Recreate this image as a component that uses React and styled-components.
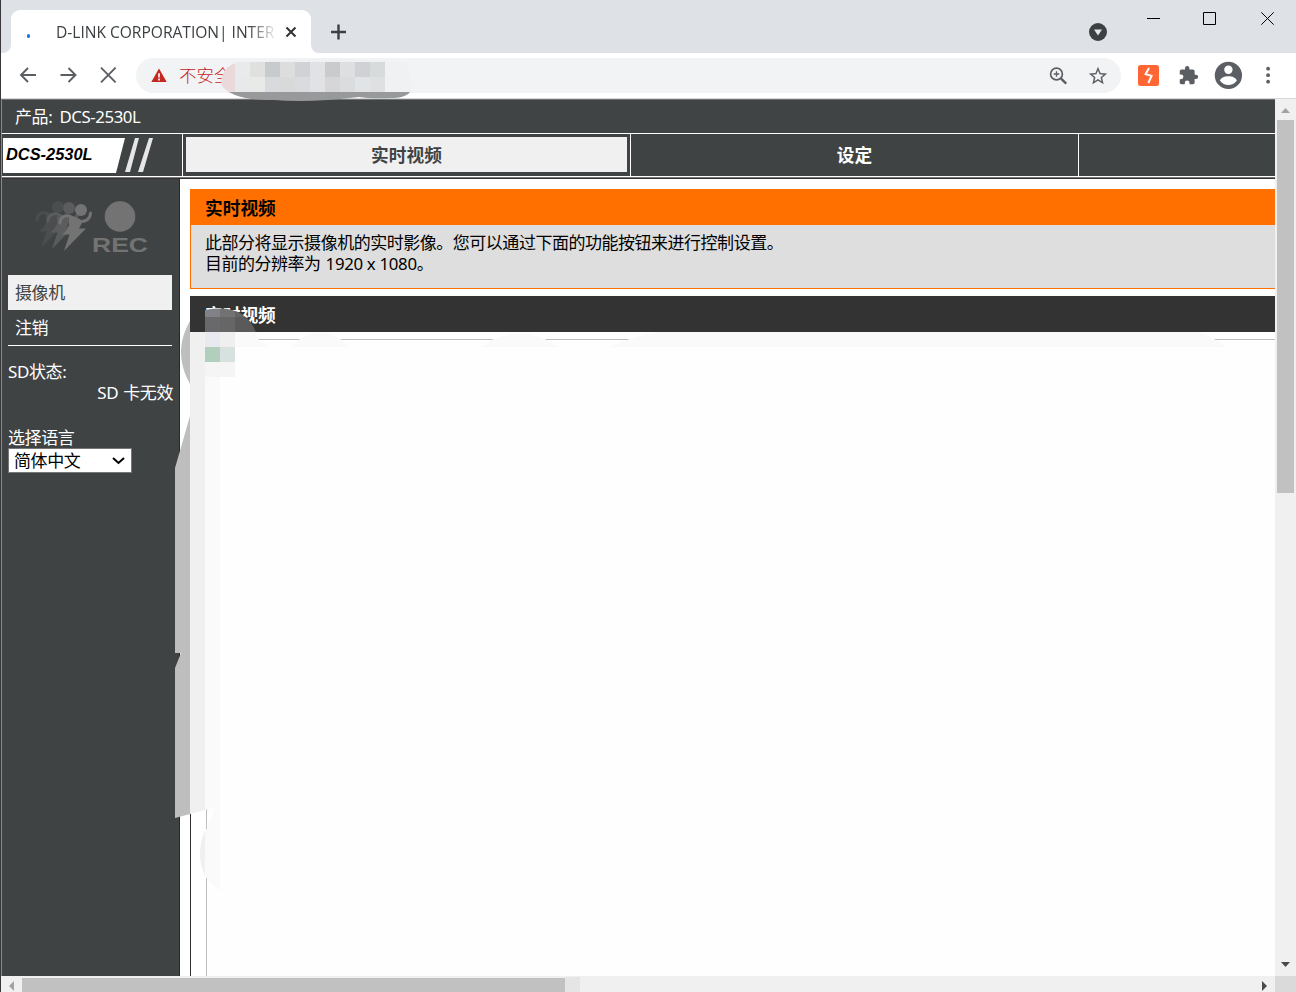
import React from "react";
import styled, { createGlobalStyle } from "styled-components";

const GlobalStyle = createGlobalStyle`
  * { box-sizing: border-box; }
  body { margin: 0; overflow: hidden; background: #fff; }
`;

const cjk = `"Noto Sans", "Noto Sans CJK SC", sans-serif`;

const Window = styled.div`
  position: relative;
  width: 1296px;
  height: 992px;
  display: flex;
  flex-direction: column;
  overflow: hidden;
  border-left: 1px solid #38383a;
  background: #fff;
  font-family: ${cjk};
`;

const TabStrip = styled.header`
  height: 53px;
  flex: none;
  display: flex;
  align-items: flex-end;
  background: #dee1e6;
  padding-left: 2px;
`;

const TabFoot = styled.svg`
  width: 8px;
  height: 8px;
  flex: none;
  display: block;
`;

const BrowserTab = styled.div`
  width: 300px;
  height: 43px;
  flex: none;
  display: flex;
  align-items: center;
  padding: 0 12px 0 16px;
  background: #fff;
  border-radius: 9px 9px 0 0;
`;

const LoadingDot = styled.span`
  width: 3px;
  height: 4px;
  margin-top: 8px;
  border-radius: 2px;
  background: #1a73e8;
`;

const TabTitle = styled.span`
  width: 219px;
  flex: none;
  margin-left: 26px;
  white-space: nowrap;
  font: 15.6px/24px "Open Sans", sans-serif;
  letter-spacing: -0.03px;
  color: #3c4043;
  mask-image: linear-gradient(90deg, #000 192px, transparent 222px);
`;

const TabClose = styled.svg`
  width: 12px;
  height: 12px;
  flex: none;
  margin-left: 10px;
`;

const NewTab = styled.svg`
  width: 16px;
  height: 16px;
  margin: 0 0 13px 12px;
`;

const WindowControls = styled.div`
  margin-left: auto;
  align-self: flex-start;
  display: flex;
  align-items: flex-start;
`;

const Glyph = styled.svg`
  display: block;
  flex: none;
  width: ${(p) => p.$w}px;
  height: ${(p) => p.$h || p.$w}px;
  margin-left: ${(p) => p.$left || 0}px;
  margin-top: ${(p) => p.$top || 0}px;
`;

const Toolbar = styled.div`
  height: 46px;
  flex: none;
  display: flex;
  align-items: center;
  padding: 0 0 1px 16px;
  border-bottom: 1px solid #d4d6d8;
`;

const Omnibox = styled.div`
  width: 985px;
  height: 35px;
  margin-left: 18px;
  display: flex;
  align-items: center;
  padding: 0 11px 0 15px;
  border-radius: 18px;
  background: #f1f3f4;
`;

const Insecure = styled.span`
  width: 54px;
  flex: none;
  white-space: nowrap;
  margin-left: 12px;
  font-size: 17.5px;
  line-height: 26px;
  font-weight: 300;
  color: #c5221f;
`;

const Viewport = styled.div`
  height: 877px;
  flex: none;
  display: flex;
`;

const Page = styled.main`
  width: 1274px;
  flex: none;
  display: flex;
  flex-direction: column;
  border-top: 1px solid #707172;
  border-left: 1px solid #8a8a8b;
`;

const ProductBar = styled.div`
  height: 34px;
  flex: none;
  padding: 4px 0 0 13px;
  background: #404444;
  border-bottom: 1px solid #fff;
  color: #fff;
  font-size: 17px;
  line-height: 25px;
  letter-spacing: -0.4px;
`;

const Latin = styled.span`
  margin-left: ${(p) => p.$gap || 0}px;
  font-size: 16.8px;
  letter-spacing: ${(p) => p.$spacing}px;
`;

const NavBar = styled.nav`
  height: 43px;
  flex: none;
  display: flex;
  background: #404344;
  border-bottom: 1px solid #fff;
`;

const LogoCell = styled.div`
  width: 181px;
  height: 42px;
  display: flex;
  align-items: center;
  border-right: 1px solid #fff;
`;

const ModelPlate = styled.div`
  position: relative;
  width: 152px;
  height: 36px;
  margin: 0 0 0 1px;
`;

const ModelName = styled.span`
  position: absolute;
  left: 3px;
  top: 7px;
  font: italic bold 16.4px/20px "Liberation Sans", sans-serif;
  color: #000;
`;

const NavTab = styled.a`
  width: 448px;
  height: 42px;
  padding: 3px;
  border-right: 1px solid #fff;
  color: ${(p) => (p.$active ? "#404344" : "#fff")};
  font-size: 17.7px;
  font-weight: 700;
  line-height: 36px;
  text-align: center;

  span {
    display: block;
    height: 35px;
    background: ${(p) => (p.$active ? "#f0f0f0" : "transparent")};
  }
`;

const Rule = styled.div`
  height: 2px;
  flex: none;
  border-top: 1px solid #777;
  background: #333;
`;

const Body = styled.div`
  flex: 1;
  display: flex;
  min-height: 0;
`;

const Sidebar = styled.aside`
  width: 178px;
  flex: none;
  padding: 20px 6px 0;
  background: #404344;
  border-right: 1px solid #282a2a;
  color: #fff;
  font-size: 17px;
  line-height: 22px;
  letter-spacing: -0.4px;
`;

const Indicators = styled.svg`
  display: block;
  width: 118px;
  height: 56px;
  margin: 0 0 20px 25px;
`;

const MenuItem = styled.div`
  width: 164px;
  height: ${(p) => (p.$active ? 35 : 36)}px;
  padding-left: 7px;
  line-height: 35px;
  background: ${(p) => (p.$active ? "#f0f0f0" : "transparent")};
  color: ${(p) => (p.$active ? "#404344" : "#fff")};
  border-bottom: ${(p) => (p.$active ? "none" : "1px solid #fff")};
`;

const Status = styled.div`
  width: 165px;
  margin-top: 15px;
`;

const StatusValue = styled.div`
  margin-top: -1px;
  text-align: right;
  word-spacing: 1px;
`;

const LanguageLabel = styled.div`
  margin-top: 24px;
  height: 20px;
  line-height: 20px;
`;

const LanguageSelect = styled.div`
  width: 124px;
  height: 25px;
  display: flex;
  justify-content: space-between;
  align-items: center;
  padding: 0 6px 0 5px;
  background: #fff;
  border: 1px solid #777;
  color: #000;
`;

const Content = styled.section`
  flex: 1;
  min-width: 0;
  padding: 10px 0 0 10px;
  display: flex;
  flex-direction: column;
  background: #fff;
`;

const PanelTitle = styled.h2`
  height: 36px;
  flex: none;
  margin: 0;
  padding-left: 15px;
  font-size: 17.7px;
  font-weight: 700;
  line-height: 38px;
  background: ${(p) => (p.$dark ? "#333" : "#ff7000")};
  color: ${(p) => (p.$dark ? "#fff" : "#000")};
`;

const Description = styled.div`
  height: 64px;
  flex: none;
  margin-bottom: 7px;
  padding: 7px 0 0 14px;
  background: #dedede;
  border: 1px solid #ff7000;
  border-width: 0 0 1px 1px;
  font-size: 17px;
  line-height: 21px;
  letter-spacing: -0.48px;
  color: #000;
`;

const VideoFrame = styled.div`
  flex: 1;
  padding: 7px 0 0 15px;
  border-left: 1px solid #333;
`;

const Video = styled.div`
  height: 100%;
  border: 1px solid #bdbdbd;
  border-width: 1px 0 0 1px;
  background: #fefefe;
`;

const VScroll = styled.div`
  width: 21px;
  padding: 21px 2px 0;
  background: #f0f0f0;
  display: flex;
  flex-direction: column;
`;

const HScroll = styled.div`
  height: 16px;
  display: flex;
  align-items: flex-end;
  background: #f0f0f0;
`;

const HTrackPart = styled.div`
  width: ${(p) => p.$w}px;
  height: ${(p) => p.$h}px;
  background: ${(p) => p.$bg};
`;

const VThumb = styled.div`
  height: 373px;
  background: #c1c1c1;
`;

const Smudges = styled.svg`
  position: absolute;
  left: -1px;
  top: 0;
  pointer-events: none;
`;

const addressTiles = ["#ead9da", "#e9eaec", "#e0e0df", "#c8cbce", "#dcdddc", "#d0d2d5", "#e1e2e5", "#cacbcd", "#dedfe0", "#d0d1d4", "#d8dbdc"];
const addressTilesLow = ["#ead9da", "#e7e9eb", "#e8eae8", "#d8dadd", "#d9d9da", "#dadbde", "#e1e2e6", "#d6d6d8", "#dadcdd", "#e0e4e7", "#dee0e2"];

function Runner({ x, y, color }) {
  return (
    <g transform={`translate(${x} ${y})`}>
      <circle cx="48" cy="11" r="6" fill={color} />
      <path d="M27 24c0-5 4-8 9-7 4 .8 6 5 11 5.500 6 .6 10.500-3 10.500-8.500" fill="none" stroke={color} strokeWidth="3" strokeLinecap="round" />
      <path d="M36 17c4-.5 9 2 14 5l-4 7.500h7L31 52l5.500-16.500H29c4-3 8-8 7-12z" fill={color} />
    </g>
  );
}

export default function App() {
  return (
    <>
      <GlobalStyle />
      <Window>
        <TabStrip>
          <TabFoot viewBox="0 0 8 8"><path d="M8 0v8H0a8 8 0 0 0 8-8z" fill="#fff" /></TabFoot>
          <BrowserTab>
            <LoadingDot />
            <TabTitle>D-LINK CORPORATION| INTER</TabTitle>
            <TabClose viewBox="0 0 12 12"><path d="M1.5 1.5l9 9m0-9l-9 9" stroke="#303336" strokeWidth="2" /></TabClose>
          </BrowserTab>
          <TabFoot viewBox="0 0 8 8"><path d="M0 0v8h8a8 8 0 0 1-8-8z" fill="#fff" /></TabFoot>
          <NewTab viewBox="0 0 16 16"><path d="M7.500 .5v15M0 8h15" stroke="#3c4043" strokeWidth="2.400" /></NewTab>
          <WindowControls>
            <Glyph $w={18} $top={23} viewBox="0 0 18 18">
              <circle cx="9" cy="9" r="9" fill="#3c4043" />
              <path d="M5 6.500h8L9 12.500z" fill="#e4e6e9" />
            </Glyph>
            <Glyph $w={13} $left={40} $top={12} viewBox="0 0 13 13"><path d="M0 6.500h13" stroke="#000" /></Glyph>
            <Glyph $w={13} $left={43} $top={12} viewBox="0 0 13 13"><path d="M.5.5h12v12H.5z" fill="none" stroke="#000" /></Glyph>
            <Glyph $w={13} $left={45} $top={12} viewBox="0 0 13 13"><path d="M.3.3l12.400 12.400M12.700.3L.3 12.700" stroke="#000" /></Glyph>
            <Glyph $w={22} $h={13} viewBox="0 0 22 13" />
          </WindowControls>
        </TabStrip>

        <Toolbar>
          <Glyph $w={20} viewBox="0 0 20 20"><path d="M19 10H4.500M11 3l-7 7 7 7" fill="none" stroke="#5b5e63" strokeWidth="1.900" /></Glyph>
          <Glyph $w={20} $left={21} viewBox="0 0 20 20"><path d="M2.500 10H17M10.500 3l7 7-7 7" fill="none" stroke="#5b5e63" strokeWidth="1.900" /></Glyph>
          <Glyph $w={20} $left={20} viewBox="0 0 20 20"><path d="M3 2.700l14.600 14.600m0-14.600L3 17.300" fill="none" stroke="#5b5e63" strokeWidth="1.900" /></Glyph>
          <Omnibox>
            <Glyph $w={16} $h={15} $top={1} viewBox="0 0 16 15">
              <path d="M8 .5L15.700 14H.3z" fill="#c5281f" />
              <path d="M8 5.200v4.200M8 10.500v2" stroke="#fff" strokeWidth="1.600" />
            </Glyph>
            <Insecure>不安全</Insecure>
            <Glyph $w={20} $left={815} $top={1} viewBox="0 0 20 20">
              <circle cx="8.500" cy="8" r="5.900" fill="none" stroke="#5b5e63" strokeWidth="1.700" />
              <path d="M12.800 12.300l5.400 5.400" stroke="#5b5e63" strokeWidth="2.400" />
              <path d="M8.500 5.200v5.600M5.700 8h5.600" stroke="#5b5e63" strokeWidth="1.300" />
            </Glyph>
            <Glyph $w={22} $left={19} $top={1} viewBox="0 0 24 24">
              <path fill="#5b5e63" d="M22 9.240l-7.190-.62L12 2 9.190 8.630 2 9.240l5.460 4.730L5.820 21 12 17.270 18.180 21l-1.630-7.030L22 9.240zM12 15.400l-3.760 2.270 1-4.280-3.320-2.880 4.380-.38L12 6.100l1.710 4.040 4.380.38-3.320 2.880 1 4.280L12 15.400z" />
            </Glyph>
          </Omnibox>
          <Glyph $w={21} $left={17} viewBox="0 0 21 21">
            <rect width="21" height="21" rx="2.500" fill="#ff6633" />
            <path d="M11 3L7.600 9.200l6 1.700L10.300 18" fill="none" stroke="#fff" strokeWidth="2" strokeLinejoin="miter" />
          </Glyph>
          <Glyph $w={21} $left={19} viewBox="0 0 24 24">
            <path fill="#5b5e63" d="M20.500 11H19V7c0-1.100-.9-2-2-2h-4V3.500a2.500 2.500 0 0 0-5 0V5H4c-1.100 0-1.990.9-1.990 2v3.800H3.500a2.700 2.700 0 0 1 0 5.400H2V20c0 1.100.9 2 2 2h3.800v-1.500a2.700 2.700 0 0 1 5.400 0V22H17c1.100 0 2-.9 2-2v-4h1.500a2.500 2.500 0 0 0 0-5z" />
          </Glyph>
          <Glyph $w={28} $left={15} viewBox="0 0 28 28">
            <circle cx="14.400" cy="14.400" r="13.600" fill="#5b5e63" />
            <circle cx="14.400" cy="8.700" r="4.200" fill="#fff" />
            <path d="M5.900 19.400c2.200-5.600 14.800-5.600 17 0-4.200 6.200-12.800 6.200-17 0z" fill="#fff" />
          </Glyph>
          <Glyph $w={4} $h={18} $left={24} viewBox="0 0 4 18">
            <circle cx="2.100" cy="2.700" r="1.900" fill="#5b5e63" />
            <circle cx="2.100" cy="9.200" r="1.900" fill="#5b5e63" />
            <circle cx="2.100" cy="15.700" r="1.900" fill="#5b5e63" />
          </Glyph>
        </Toolbar>

        <Viewport>
          <Page>
            <ProductBar>产品: <Latin $gap={3} $spacing={-0.4}>DCS-2530L</Latin></ProductBar>
            <NavBar>
              <LogoCell>
                <ModelPlate>
                  <svg width="152" height="36" viewBox="0 0 152 36">
                    <path d="M0 1h122l-9 35H0z" fill="#fff" />
                    <path d="M132 1h4l-9 34h-5zM146 1h4l-10 34h-5z" fill="#e6e6e6" />
                  </svg>
                  <ModelName>DCS-2530L</ModelName>
                </ModelPlate>
              </LogoCell>
              <NavTab $active><span>实时视频</span></NavTab>
              <NavTab><span>设定</span></NavTab>
            </NavBar>
            <Rule />
            <Body>
              <Sidebar>
                <Indicators viewBox="0 0 118 56">
                  <Runner x={-23} y={-3} color="#4b4e4f" />
                  <Runner x={-12} y={-2} color="#5a5c5d" />
                  <Runner x={0} y={0} color="#737373" />
                  <circle cx="87" cy="17.500" r="15.300" fill="#737373" />
                  <text x="59" y="52.500" textLength="56" lengthAdjust="spacingAndGlyphs" fill="#737373" fontFamily="Liberation Sans, sans-serif" fontSize="21" fontWeight="700" letterSpacing="0">REC</text>
                </Indicators>
                <MenuItem $active>摄像机</MenuItem>
                <MenuItem>注销</MenuItem>
                <Status>
                  SD状态:
                  <StatusValue>SD 卡无效</StatusValue>
                </Status>
                <LanguageLabel>选择语言</LanguageLabel>
                <LanguageSelect>
                  简体中文
                  <svg width="13" height="8" viewBox="0 0 13 8"><path d="M1 1l5.500 5L12 1" fill="none" stroke="#000" strokeWidth="2" /></svg>
                </LanguageSelect>
              </Sidebar>
              <Content>
                <PanelTitle>实时视频</PanelTitle>
                <Description>
                  此部分将显示摄像机的实时影像。您可以通过下面的功能按钮来进行控制设置。
                  <div>目前的分辨率为 <Latin $gap={1} $spacing={-0.3}>1920 x 1080</Latin>。</div>
                </Description>
                <PanelTitle $dark>实时视频</PanelTitle>
                <VideoFrame><Video /></VideoFrame>
              </Content>
            </Body>
          </Page>
          <VScroll>
            <VThumb />
          </VScroll>
        </Viewport>
        <HScroll>
          <HTrackPart $w={21} $h={16} $bg="#f0f0f0" />
          <HTrackPart $w={543} $h={14} $bg="#c1c1c1" />
          <HTrackPart $w={15} $h={15} $bg="#e5e5e5" />
          <HTrackPart $w={695} $h={16} $bg="#f0f0f0" />
          <HTrackPart $w={21} $h={16} $bg="#dadada" />
        </HScroll>

        <Smudges width="1296" height="992" viewBox="0 0 1296 992">
          <defs>
            <clipPath id="side">
              <path d="M205 310q44-8 53 29l12 8H220V806l-30 8-15 4V668l6-15h-6V468l15-52v-32c-12-22-12-42 0-63h15z" />
            </clipPath>
            <clipPath id="address">
              <path d="M238 62Q330 55 405 63L412 80V90Q406 98 394 98q-25 1-35-1-50 6-85 3-40 1-52-14-3-18 16-24z" />
            </clipPath>
          </defs>
          <g clipPath="url(#address)">
            <path d="M220 58h200v34H220z" fill="#f0f1f2" />
            {addressTiles.map((c, i) => <rect key={i} x={220 + i * 15} y="62" width="15" height="15" fill={c} />)}
            {addressTilesLow.map((c, i) => <rect key={i} x={220 + i * 15} y="77" width="15" height="15" fill={c} />)}
            <path d="M220 92h200v10H220z" fill="#98999a" />
          </g>
          <g clipPath="url(#side)">
            <path d="M175 300h15v520h-15z" fill="#bebebe" />
            <path d="M190 332h15v488h-15z" fill="#f0f0f0" />
            <path d="M205 332h15v488h-15z" fill="#fafafa" />
            <path d="M220 332h60v15h-60z" fill="#fafafa" />
            <path d="M205 302h15v15h-15z" fill="#808287" />
            <path d="M220 302h15v15h-15z" fill="#727272" />
            <path d="M235 302h40v15h-40z" fill="#656565" />
            <path d="M205 317h15v15h-15z" fill="#69696b" />
            <path d="M220 317h15v15h-15z" fill="#666" />
            <path d="M235 317h40v15h-40z" fill="#5a5a5a" />
            <path d="M205 332h15v15h-15z" fill="#e9eaf0" />
            <path d="M220 332h15v15h-15z" fill="#efefef" />
          </g>
          <path d="M205 347h15v15h-15z" fill="#b2cebc" />
          <path d="M220 347h15v15h-15z" fill="#d7e1df" />
          <path d="M205 362h30v15h-30z" fill="#f5f5f5" />
          <path d="M291 347q28-30 59 0zM480 347q38-27 80 0zM610 347l22-9 25-6h542q15 5 26 15z" fill="#fafafa" />
          <path d="M216 806l-9 22q-14 26 0 51l13 12v-85z" fill="#fafafa" />
          <path d="M205 830q-10 24 0 46z" fill="#f0f0f0" />
          <path d="M1281 113l4.500-5 4.500 5z" fill="#a3a3a3" />
          <path d="M1281 962h9l-4.500 5z" fill="#4a4a4a" />
          <path d="M14 981v10l-5-5z" fill="#a3a3a3" />
          <path d="M1262 981v10l5-5z" fill="#4a4a4a" />
        </Smudges>
      </Window>
    </>
  );
}
